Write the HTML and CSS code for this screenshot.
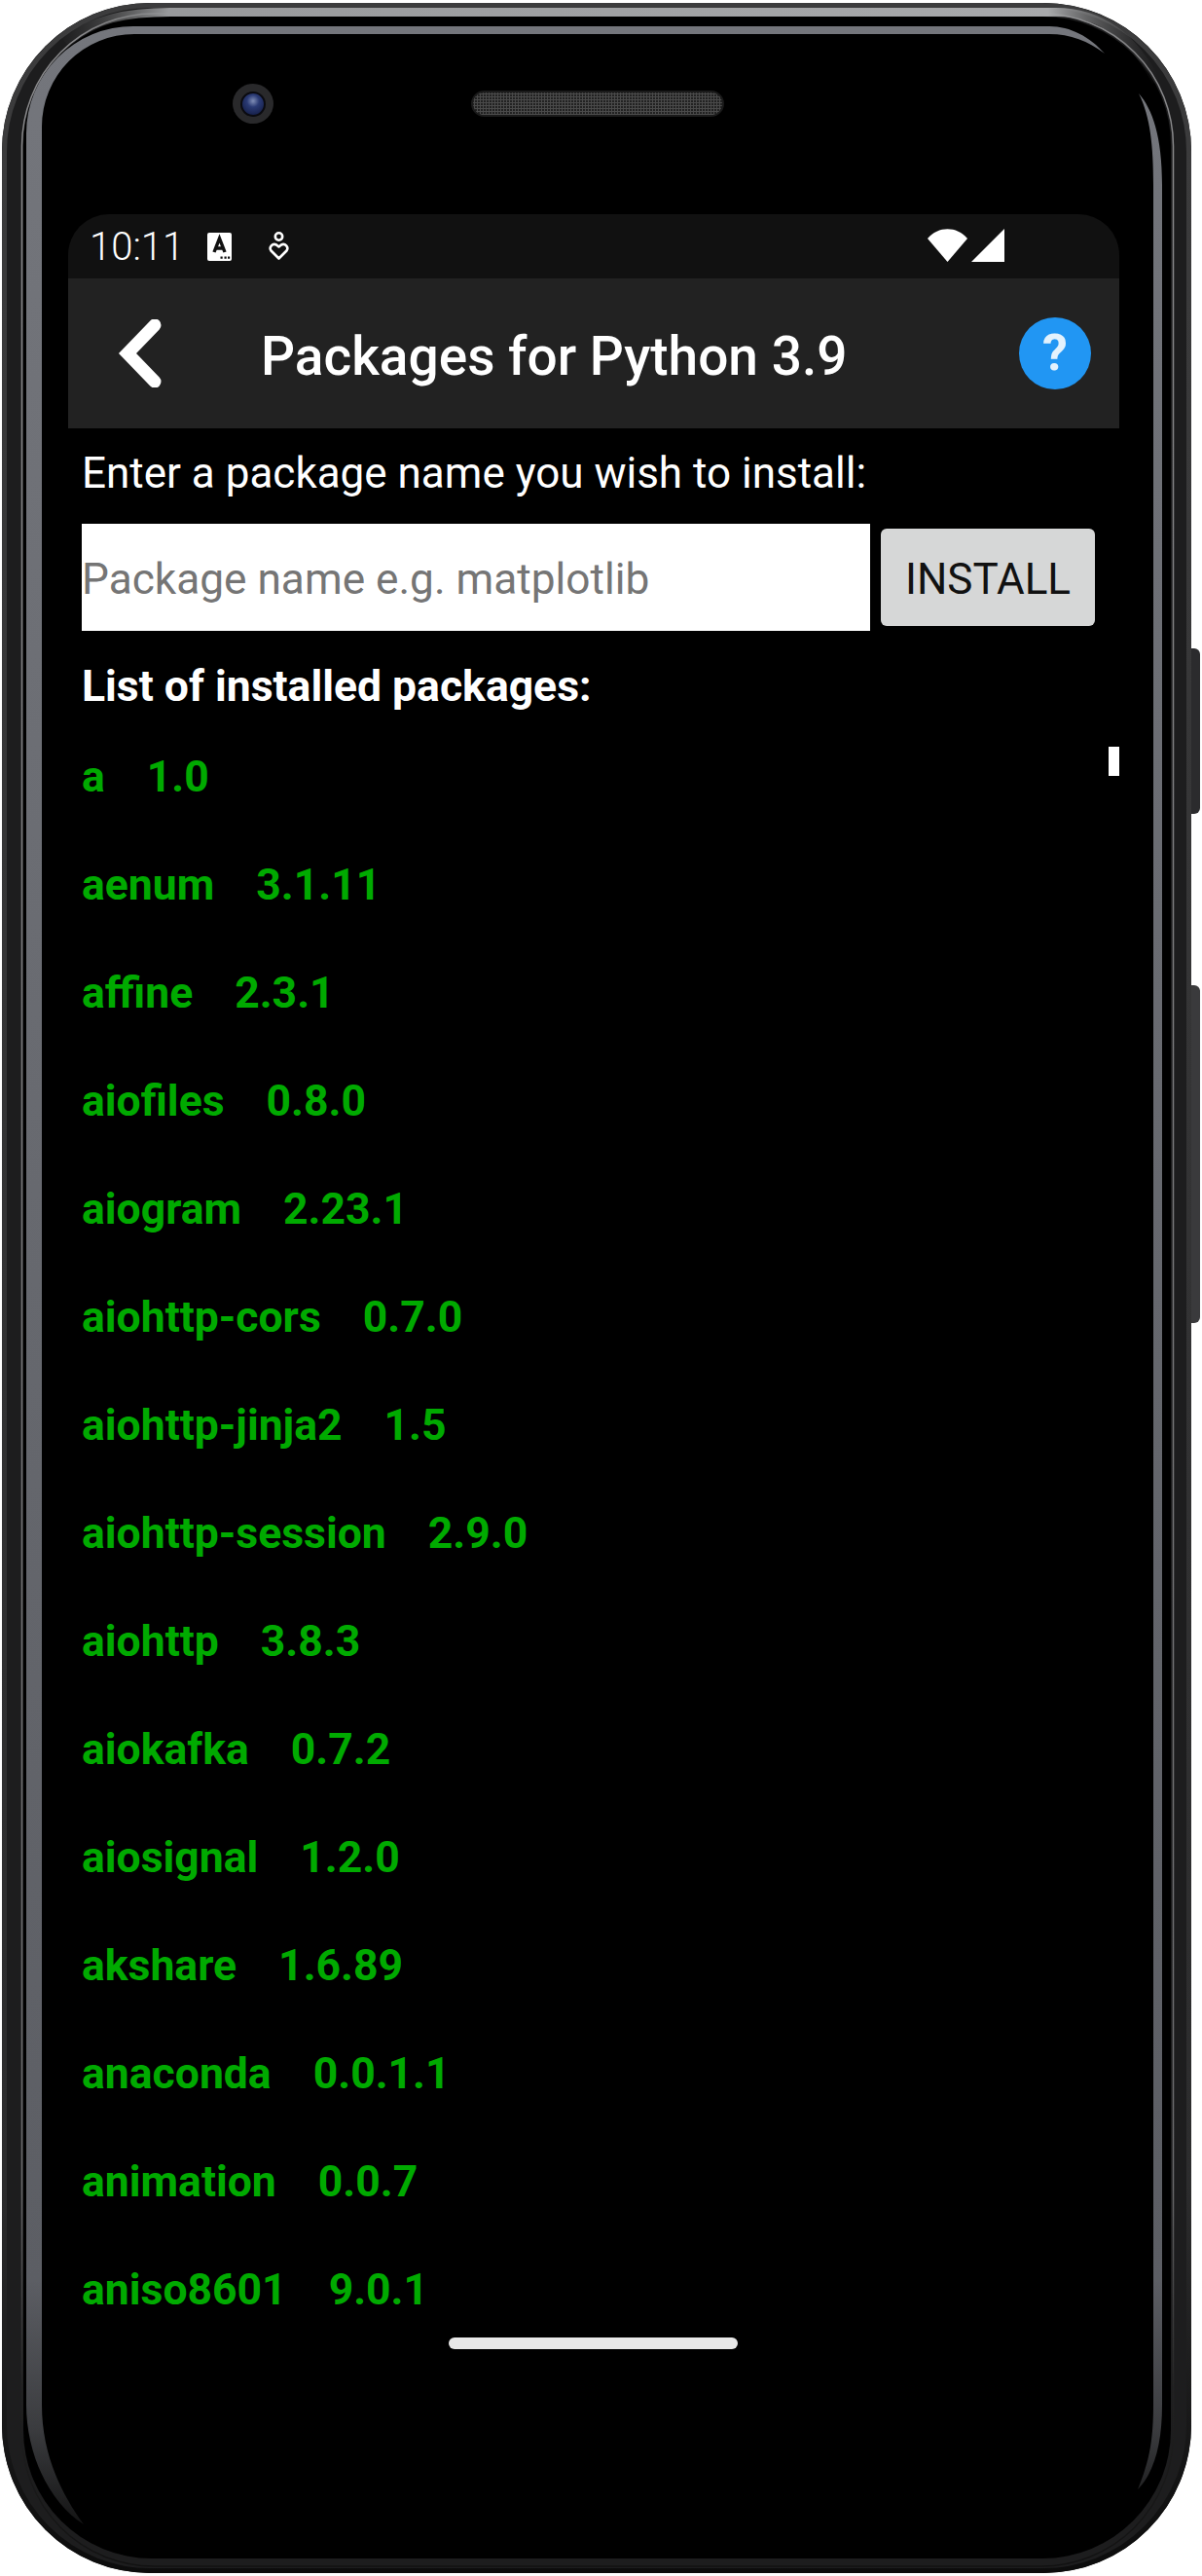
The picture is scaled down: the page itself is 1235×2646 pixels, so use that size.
FILE: index.html
```html
<!DOCTYPE html>
<html lang="en">
<head>
  <meta charset="UTF-8" />
  <title>Packages for Python 3.9</title>
  <link rel="stylesheet" href="styles.css">
</head>
<body>
  <div class="phone">
    <!-- device frame drawn behind the screen -->
    <svg class="bezel" width="1235" height="2646" viewBox="0 0 1235 2646">
      <defs>
        <linearGradient id="shell" x1="0" y1="0" x2="0" y2="1">
          <stop offset="0" stop-color="#3c3c3d"/>
          <stop offset="0.85" stop-color="#2c2c2d"/>
          <stop offset="1" stop-color="#0c0c0c"/>
        </linearGradient>
        <linearGradient id="ringGrey" gradientUnits="userSpaceOnUse" x1="0" y1="27" x2="0" y2="2600">
          <stop offset="0" stop-color="#74767c"/>
          <stop offset="0.5" stop-color="#66686e"/>
          <stop offset="0.9" stop-color="#5c5e64"/>
          <stop offset="0.96" stop-color="#3a3b3e"/>
          <stop offset="1" stop-color="#111"/>
        </linearGradient>
        <linearGradient id="silver" gradientUnits="userSpaceOnUse" x1="60" y1="0" x2="1190" y2="0">
          <stop offset="0" stop-color="#555" stop-opacity="0"/>
          <stop offset="0.1" stop-color="#98999b"/>
          <stop offset="0.9" stop-color="#a8a9ab"/>
          <stop offset="1" stop-color="#555" stop-opacity="0"/>
        </linearGradient>
        <linearGradient id="hairline" x1="0" y1="0" x2="0" y2="1">
          <stop offset="0" stop-color="#8a8a8c"/>
          <stop offset="0.85" stop-color="#6a6a6c"/>
          <stop offset="0.93" stop-color="#222"/>
          <stop offset="1" stop-color="#111"/>
        </linearGradient>
      </defs>
      <rect x="1218" y="666" width="15" height="170" rx="6" fill="#2b2b2d"/>
      <rect x="1218" y="1012" width="15" height="347" rx="6" fill="#3a3a3c"/>
      <rect x="2" y="3" width="1222" height="2640" rx="152" fill="#000"/>
      <rect x="4.500" y="5.500" width="1217" height="2635" rx="150" fill="#1d1d1e" stroke="url(#shell)" stroke-width="5"/>
      <rect x="22.500" y="14" width="1183" height="2622" rx="136" fill="none" stroke="url(#hairline)" stroke-width="1.500"/>
      <rect x="24" y="17" width="1179" height="2611" rx="132" fill="#000"/>
      <path d="M66 42 C95 20 130 12.500 175 12.500 H1085 C1130 12.500 1165 38 1188 84" fill="none" stroke="url(#silver)" stroke-width="9"/>
      <path d="M1135 55 C1120 38 1100 27 1078 27 H137 A110 110 0 0 0 27 137 V2470 C27 2520 50 2570 86 2593 C62 2560 43 2520 43 2470 V130 A95 95 0 0 1 138 35 H1078 C1100 35 1118 42 1135 55 Z" fill="url(#ringGrey)"/>
      <path d="M1170 96 C1184 112 1194 140 1194 190 V2470 C1194 2510 1186 2540 1169 2557 C1180 2530 1185 2510 1185 2470 V190 C1185 150 1182 120 1170 96 Z" fill="url(#ringGrey)"/>
    </svg>
    <div class="sensors">
      <div class="camera"><div class="lens"></div></div>
      <div class="speaker"></div>
    </div>

    <main class="screen">
      <div class="status-bar">
        <span class="clock">10:11</span>
        <svg class="ic-a" width="25" height="29" viewBox="0 0 25 29">
          <rect width="25" height="29" rx="2" fill="#fff"/>
          <path d="M7 20 L12.500 6 L18 20 M9.500 16 H15.500" fill="none" stroke="#111" stroke-width="3.400"/>
          <path d="M13.500 24.500h2.200v2.200h-2.200zM17.500 24.500h2.200v2.200h-2.200zM21 24.500h2.200v2.200h-2.200z" fill="#111"/>
        </svg>
        <svg class="ic-heart" width="21" height="30" viewBox="0 0 21 30">
          <circle cx="10.500" cy="5" r="3.700" fill="none" stroke="#fff" stroke-width="2.600"/>
          <path d="M10.500 27.500 L2.500 19.500 C0 16 4 11.500 8 13.500 L10.500 15.500 L13 13.500 C17 11.500 21 16 18.500 19.500 Z" fill="none" stroke="#fff" stroke-width="2.600" stroke-linejoin="round"/>
        </svg>
        <div class="status-right">
          <svg width="41" height="34" viewBox="0 0 41 34">
            <path d="M0 10 C11 -3 30 -3 41 10 L20.500 34 Z" fill="#fff"/>
          </svg>
          <svg width="34" height="34" viewBox="0 0 34 34">
            <path d="M34 0 V34 H0 Z" fill="#fff"/>
          </svg>
        </div>
      </div>

      <header class="app-bar">
        <svg class="back" width="46" height="70" viewBox="0 0 46 70">
          <path d="M39 6 L11 35 L39 64" fill="none" stroke="#fff" stroke-width="13" stroke-linecap="round" stroke-linejoin="miter"/>
        </svg>
        <h1>Packages for Python 3.9</h1>
        <span class="help">?</span>
      </header>

      <section class="content">
        <p class="label">Enter a package name you wish to install:</p>
        <div class="install-row">
          <input class="pkg-input" type="text" placeholder="Package name e.g. matplotlib">
          <button class="btn-install">INSTALL</button>
        </div>
        <h2>List of installed packages:</h2>
        <ul class="pkg-list">
          <li><span>a</span><span>1.0</span></li>
          <li><span>aenum</span><span>3.1.11</span></li>
          <li><span>affine</span><span>2.3.1</span></li>
          <li><span>aiofiles</span><span>0.8.0</span></li>
          <li><span>aiogram</span><span>2.23.1</span></li>
          <li><span>aiohttp-cors</span><span>0.7.0</span></li>
          <li><span>aiohttp-jinja2</span><span>1.5</span></li>
          <li><span>aiohttp-session</span><span>2.9.0</span></li>
          <li><span>aiohttp</span><span>3.8.3</span></li>
          <li><span>aiokafka</span><span>0.7.2</span></li>
          <li><span>aiosignal</span><span>1.2.0</span></li>
          <li><span>akshare</span><span>1.6.89</span></li>
          <li><span>anaconda</span><span>0.0.1.1</span></li>
          <li><span>animation</span><span>0.0.7</span></li>
          <li><span>aniso8601</span><span>9.0.1</span></li>
        </ul>
        <div class="scroll-thumb"></div>
      </section>
      <div class="home-bar"></div>
    </main>
  </div>
</body>
</html>
```

FILE: styles.css
```css
* {
  margin: 0;
  padding: 0;
  box-sizing: border-box;
}

html, body {
  background: #fff;
  font-family: Roboto, sans-serif;
}

.phone {
  position: relative;
  width: 1235px;
  height: 2646px;
  overflow: hidden;
  padding: 220px 85px 0 70px;
}

.bezel {
  position: absolute;
  top: 0;
  left: 0;
}

.sensors {
  position: absolute;
  top: 86px;
  left: 239px;
  display: flex;
  align-items: center;
  gap: 203px;
}

.camera {
  width: 42px;
  height: 41px;
  border-radius: 50%;
  background: #29292b;
  display: flex;
  align-items: center;
  justify-content: center;
}

.lens {
  width: 26px;
  height: 26px;
  border-radius: 50%;
  border: 2px solid #0b0b10;
  background: radial-gradient(circle at 50% 35%, #7f8db5 0, #2a3a74 35%, #0e1538 100%);
}

.speaker {
  width: 260px;
  height: 27px;
  border-radius: 14px;
  border: 2px solid #1a1a1a;
  background: #222 radial-gradient(circle, #4a4a4a 1px, transparent 1.2px) 0 0 / 3px 3px;
}

.screen {
  position: relative;
  width: 1080px;
}

.status-bar {
  display: flex;
  align-items: center;
  height: 66px;
  padding: 0 118px 0 22px;
  background: #111;
  border-radius: 42px 42px 0 0;
  color: #fff;
}

.clock {
  font-size: 40px;
  font-weight: 300;
  width: 121px;
}

.ic-heart {
  margin-left: 38px;
}

.status-right {
  margin-left: auto;
  display: flex;
  gap: 4px;
  margin-top: -2px;
}

.app-bar {
  display: flex;
  align-items: center;
  height: 154px;
  background: #222;
  color: #fff;
  padding: 0 29px 0 50px;
}

.back {
  flex: none;
}

.app-bar h1 {
  font-size: 55px;
  font-weight: 500;
  margin-left: 102px;
  padding-top: 6px;
}

.help {
  margin-left: auto;
  width: 74px;
  height: 74px;
  border-radius: 50%;
  background: #2196f3;
  color: #e3f2fd;
  font-size: 52px;
  font-weight: 700;
  text-align: center;
  line-height: 74px;
}

.content {
  position: relative;
  padding: 0 15px 0 14px;
}

.label {
  color: #fff;
  font-size: 44px;
  line-height: 50px;
  padding-top: 21px;
}

.install-row {
  display: flex;
  align-items: center;
  gap: 11px;
  margin-top: 27px;
}

.pkg-input {
  width: 810px;
  height: 110px;
  border: none;
  background: #fff;
  font-family: inherit;
  font-size: 44.200px;
  padding: 4px 0 0;
}

.pkg-input::placeholder {
  color: #757575;
}

.btn-install {
  width: 220px;
  height: 100px;
  border: none;
  border-radius: 6px;
  background: #d6d7d7;
  color: #111;
  font-family: inherit;
  font-size: 44px;
  font-weight: 400;
  padding-top: 3px;
}

h2 {
  color: #fff;
  font-size: 44.500px;
  font-weight: 700;
  line-height: 50px;
  margin-top: 32px;
}

.pkg-list {
  list-style: none;
  margin-top: 12px;
}

.pkg-list li {
  display: flex;
  gap: 43px;
  height: 111px;
  align-items: center;
  color: #00aa00;
  font-size: 44.500px;
  font-weight: 700;
}

.scroll-thumb {
  position: absolute;
  top: 327px;
  right: 0;
  width: 11px;
  height: 30px;
  background: #fff;
}

.home-bar {
  position: absolute;
  top: 2181px;
  left: 391px;
  width: 297px;
  height: 12px;
  border-radius: 6px;
  background: #e8e8e8;
}
```
